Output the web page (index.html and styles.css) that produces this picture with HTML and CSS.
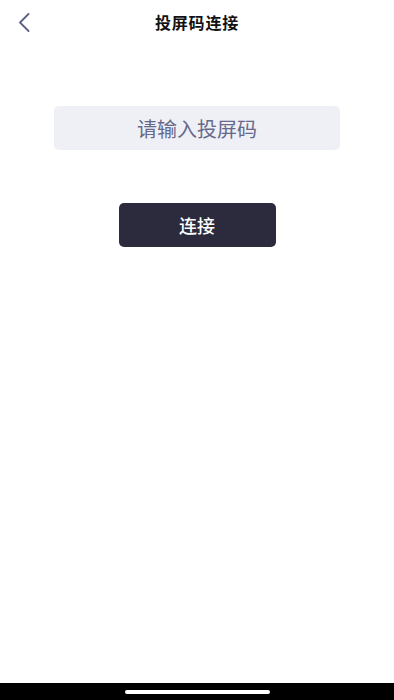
FILE: index.html
```html
<!DOCTYPE html>
<html lang="zh-CN">
<head>
  <meta charset="UTF-8">
  <title>投屏码连接</title>
  <meta name="viewport" content="width=device-width, initial-scale=1.0">
  <link rel="stylesheet" href="styles.css">
</head>
<body>
  <div class="page">
    <!-- Nav bar -->
    <header class="nav">
      <button class="back" aria-label="返回">
        <svg width="12" height="19" viewBox="0 0 12 19">
          <path d="M10.5 1 L2 9.5 L10.5 18" fill="none" stroke="#5c6088" stroke-width="1.8" stroke-linecap="round" stroke-linejoin="round"/>
        </svg>
      </button>
      <h1 class="title">投屏码连接</h1>
    </header>

    <main class="content">
      <input class="code-input" type="text" placeholder="请输入投屏码">
      <button class="connect-btn">连接</button>
    </main>

    <div class="home-bar">
      <span class="home-indicator"></span>
    </div>
  </div>
</body>
</html>
```

FILE: styles.css
```css
* {
  box-sizing: border-box;
}

body {
  margin: 0;
  background: #fff;
  font-family: "Noto Sans CJK SC", "Noto Sans", sans-serif;
}

.page {
  height: 700px;
  display: flex;
  flex-direction: column;
}

.nav {
  height: 44px;
  display: flex;
  align-items: center;
  justify-content: center;
  position: relative;
}

.back {
  position: absolute;
  left: 18px;
  top: 13px;
  padding: 0;
  border: none;
  background: none;
  display: flex;
}

.title {
  margin: 0;
  font-size: 16px;
  font-weight: 700;
  color: #111;
  letter-spacing: 0.8px;
}

.content {
  flex: 1;
  display: flex;
  flex-direction: column;
  align-items: center;
  padding-top: 62px;
}

.code-input {
  width: 286px;
  height: 44px;
  border: none;
  border-radius: 5px;
  background: #eff0f6;
  text-align: center;
  font-family: inherit;
  font-size: 20px;
  color: #333;
  outline: none;
}

.code-input::placeholder {
  color: #66698a;
}

.connect-btn {
  margin-top: 53px;
  width: 157px;
  height: 44px;
  border: none;
  border-radius: 5px;
  background: #2c2b3e;
  color: #fff;
  font-family: inherit;
  font-size: 18px;
  font-weight: 500;
}

.home-bar {
  height: 17px;
  background: #000;
  display: flex;
  justify-content: center;
  padding-top: 7px;
}

.home-indicator {
  width: 145px;
  height: 4px;
  border-radius: 2px;
  background: #fff;
}
```
